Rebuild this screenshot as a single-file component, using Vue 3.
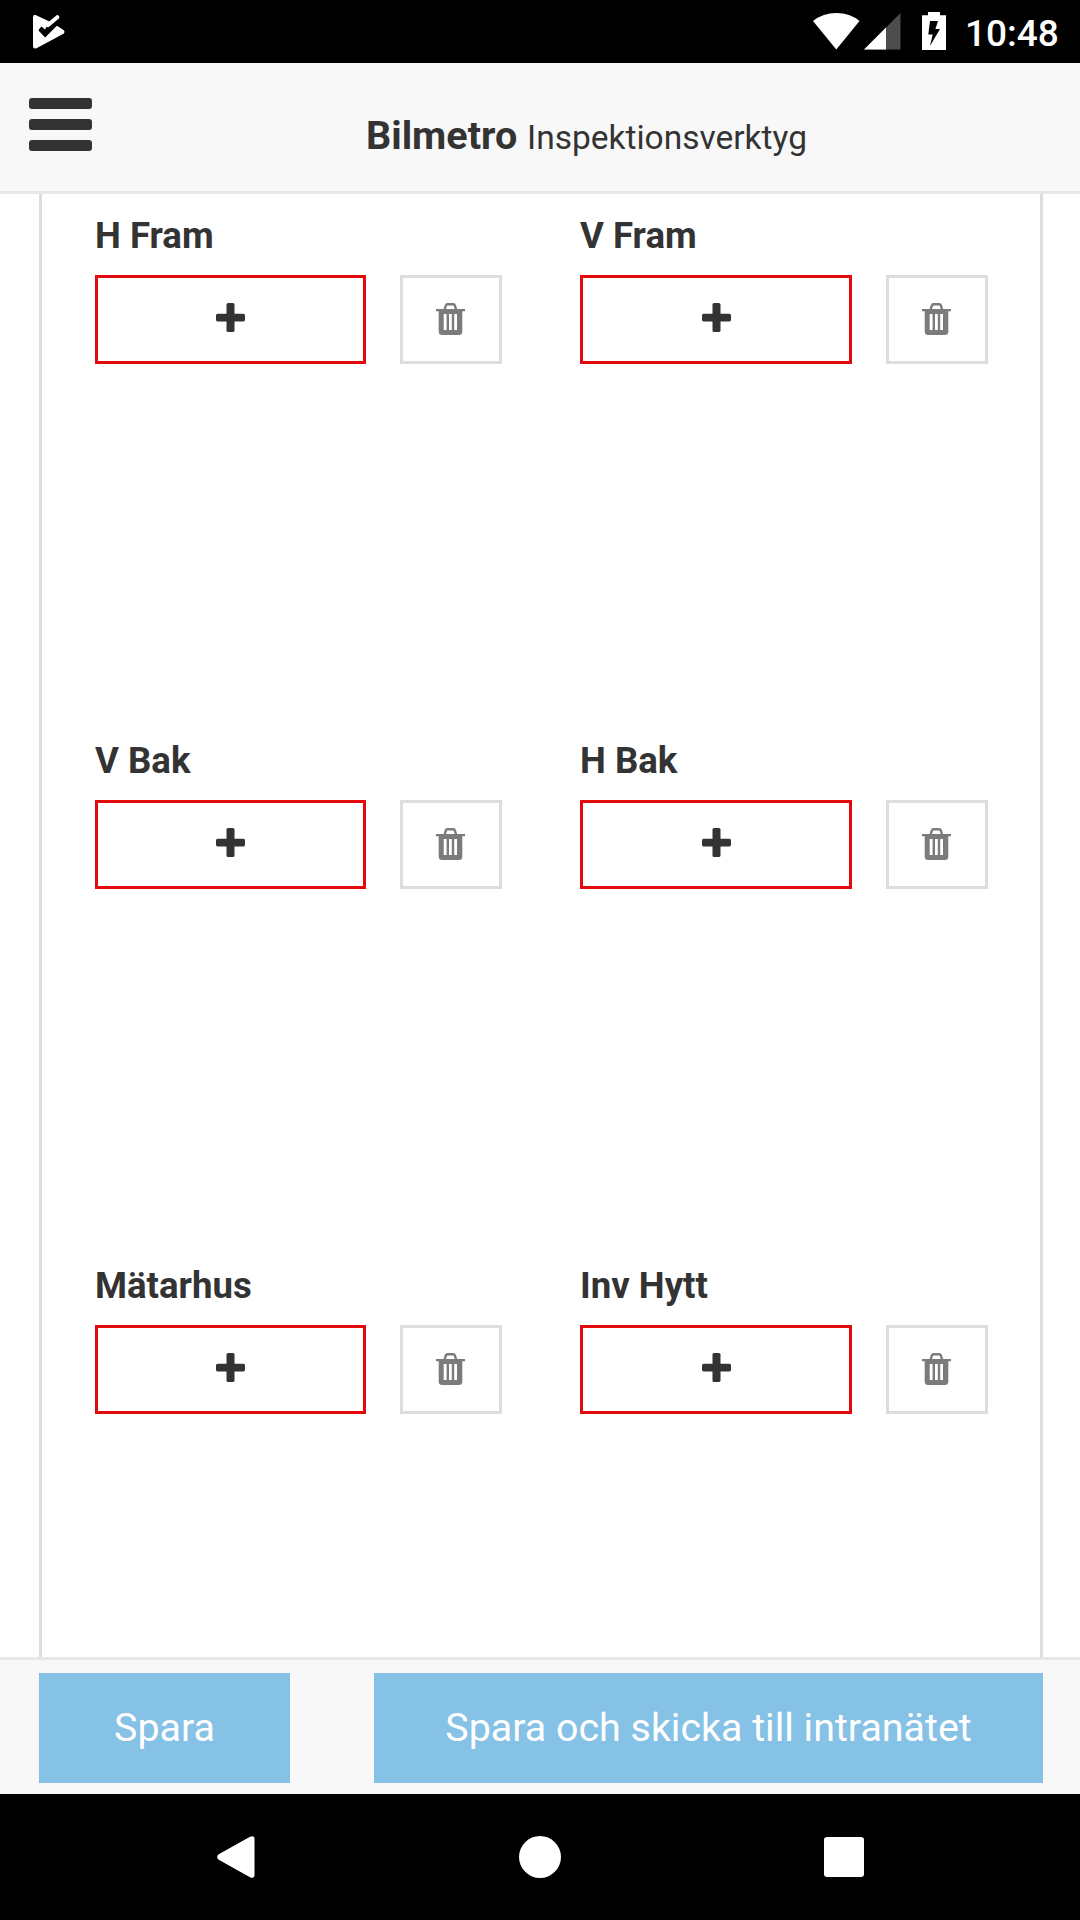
<script setup>
const slots = ['H Fram', 'V Fram', 'V Bak', 'H Bak', 'Mätarhus', 'Inv Hytt']
</script>

<template>
  <div class="screen">
    <div class="status">
      <svg class="check" width="32" height="34" viewBox="0 0 32 34">
        <path d="M2.5 0 L16.5 6.5 L12 14.5 L8.5 11.5 L5.8 14.5 L12 21.5 L23.5 10.5 L30.5 15 Q32.5 16.8 30.5 18.7 L3.5 33.3 Q0 34.3 0 31 V2.5 Q0 -.5 2.5 0Z" fill="#fff" />
        <path d="M7 14 L12.2 19.5 L25.5 6" fill="none" stroke="#000" stroke-width="4.2" />
        <path d="M14.8 10.2 L24.3 2.2" fill="none" stroke="#fff" stroke-width="4" stroke-linecap="round" />
      </svg>
      <div class="indicators">
        <svg class="wifi" width="47" height="37" viewBox="0 0 47 37">
          <path d="M0 8 Q10 0 23.3 0 Q37 0 46.5 8 L23.3 36.5Z" fill="#fff" />
        </svg>
        <svg class="signal" width="37" height="37" viewBox="0 0 37 37">
          <path d="M0 36.5 L36.5 0 V36.5Z" fill="#4d4d4d" />
          <path d="M0 36.5 L22 14.5 V36.5Z" fill="#fff" />
        </svg>
        <svg class="battery" width="24" height="38" viewBox="0 0 24 38">
          <path d="M0 3.2 H6 V0 H18 V3.2 H24 V38 H0Z" fill="#fff" />
          <path d="M8 9 H16 L13.4 17 H18 L8 34 L10.7 22.5 H6.3Z" fill="#000" />
        </svg>
        <span class="clock">10:48</span>
      </div>
    </div>

    <header class="header">
      <div class="menu"><i></i><i></i><i></i></div>
      <h1 class="title"><b>Bilmetro</b> <small>Inspektionsverktyg</small></h1>
    </header>

    <main class="content">
      <div class="panel">
        <section v-for="slot in slots" :key="slot" class="slot">
          <div class="label">{{ slot }}</div>
          <div class="actions">
            <button class="add">
              <svg width="29" height="29" viewBox="0 0 29 29" fill="#333">
                <rect x="10.5" width="8" height="29" rx="1.6" />
                <rect y="10.7" width="29" height="7.7" rx="1.6" />
              </svg>
            </button>
            <button class="remove">
              <svg width="29" height="32" viewBox="0 0 29 32">
                <path d="M8.5 7 L9.8 2.7 Q10.2 1.3 11.5 1.3 H17.2 Q18.5 1.3 18.9 2.7 L20.2 7" fill="none" stroke="#7b7b7b" stroke-width="2.4" />
                <path fill="#7b7b7b" fill-rule="evenodd" d="M0 6 H29 V8.3 H26.3 V28.5 Q26.3 32 22.8 32 H6.2 Q2.7 32 2.7 28.5 V8.3 H0Z M7.7 11 V27 H10.6 V11Z M13 11 V27 H15.8 V11Z M18.2 11 V27 H21 V11Z" />
              </svg>
            </button>
          </div>
        </section>
      </div>
    </main>

    <footer class="footer">
      <button class="save">Spara</button>
      <button class="save send">Spara och skicka till intranätet</button>
    </footer>

    <nav class="nav">
      <svg width="38" height="42" viewBox="0 0 38 42">
        <path d="M1.3 18.5 L33 .8 Q37.5 -1 37.5 3 V39 Q37.5 43 33 41.2 L1.3 23.5 Q-1 21 1.3 18.5Z" fill="#fff" />
      </svg>
      <span class="home"></span>
      <span class="recent"></span>
    </nav>
  </div>
</template>

<style>
body { margin: 0; background: #fff; }
</style>

<style scoped>
.screen {
  width: 1080px;
  height: 1920px;
  display: flex;
  flex-direction: column;
  overflow: hidden;
  color: #333;
  background: #fff;
  font-family: Roboto, "Liberation Sans", sans-serif;
}
.screen * { box-sizing: border-box; }
svg { display: block; flex: none; }
.status {
  height: 63px;
  flex: none;
  display: flex;
  justify-content: space-between;
  padding: 0 22px 0 32.5px;
  background: #000;
}
.check { margin-top: 14.5px; }
.indicators { display: flex; align-items: flex-start; }
.wifi { margin: 13px 4px 0 0; }
.signal { margin: 13px 21px 0 0; }
.battery { margin-top: 12px; }
.clock {
  width: 93px;
  margin: 13px 0 0 19px;
  color: #fff;
  font-size: 37px;
  font-weight: 500;
  line-height: 42px;
}
.header {
  height: 131px;
  flex: none;
  display: flex;
  padding-left: 29px;
  background: #f8f8f8;
  border-bottom: 3px solid #e7e7e7;
}
.menu {
  width: 63px;
  height: 53px;
  margin-top: 35px;
  display: flex;
  flex-direction: column;
  justify-content: space-between;
}
.menu i { height: 11px; border-radius: 3px; background: #333; }
.title {
  margin: 50px 0 0 274px;
  font-size: 39.5px;
  line-height: 46px;
  font-weight: 400;
  white-space: nowrap;
}
.title small { font-size: 33.5px; }
.content { flex: 1; min-height: 0; overflow: hidden; padding: 0 37px 0 39px; }
.panel {
  height: 100%;
  display: grid;
  grid-template-columns: 407px 408px;
  grid-auto-rows: 525px;
  column-gap: 78px;
  align-content: start;
  padding: 21px 0 0 53px;
  border: solid #ddd;
  border-width: 0 3px;
}
.label { height: 60px; font-size: 36.6px; line-height: 42px; font-weight: 700; }
.actions { display: flex; justify-content: space-between; }
button { font-family: inherit; padding: 0; border: 0; border-radius: 0; display: flex; align-items: center; justify-content: center; }
.add { height: 89px; width: 271px; background: #fff; border: 3px solid #e4090c; padding-bottom: 4px; }
.slot:nth-child(even) .add { width: 272px; }
.remove { height: 89px; width: 102px; background: #fff; border: 3px solid #ddd; padding: 0 1px 2px 0; }
.footer {
  height: 137px;
  flex: none;
  display: flex;
  justify-content: space-between;
  padding: 13px 37px 0 39px;
  border-top: 3px solid #e7e7e7;
  background: #f8f8f8;
}
.save { width: 251px; height: 110px; background: #86c1e6; color: #fff; font-size: 39.4px; line-height: 46px; }
.send { width: 669px; }
.nav {
  height: 126px;
  flex: none;
  display: flex;
  align-items: center;
  justify-content: space-between;
  padding: 0 216px 0 217px;
  background: #000;
}
.home { width: 42px; height: 42px; margin-right: -1px; border-radius: 50%; background: #fff; }
.recent { width: 40px; height: 40px; border-radius: 3px; background: #fff; }
</style>
